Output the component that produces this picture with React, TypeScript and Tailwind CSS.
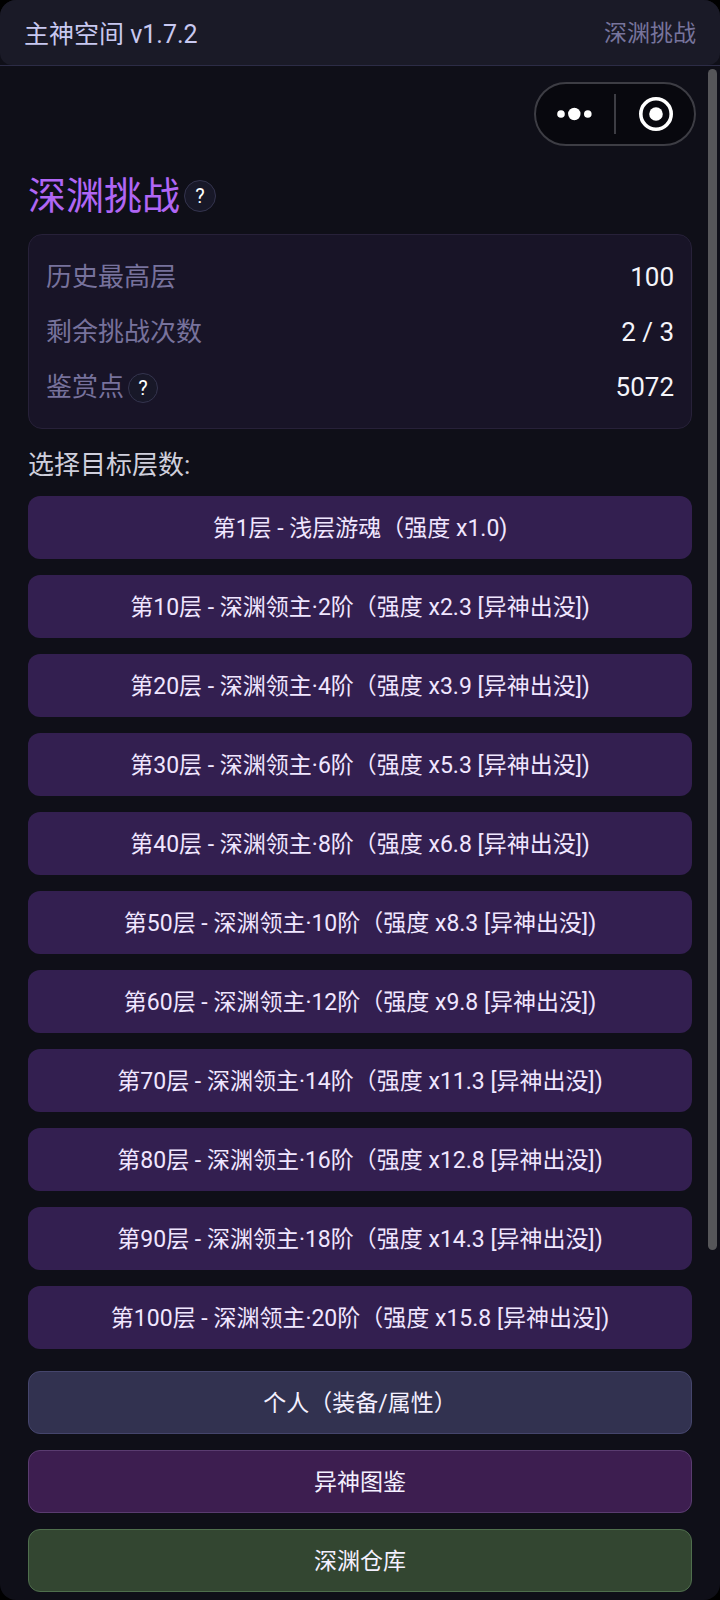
import React from 'react'

interface Floor {
  level: number
  name: string
  power: string
  boss?: boolean
}

const floors: Floor[] = [
  { level: 1, name: '浅层游魂', power: '1.0' },
  { level: 10, name: '深渊领主·2阶', power: '2.3', boss: true },
  { level: 20, name: '深渊领主·4阶', power: '3.9', boss: true },
  { level: 30, name: '深渊领主·6阶', power: '5.3', boss: true },
  { level: 40, name: '深渊领主·8阶', power: '6.8', boss: true },
  { level: 50, name: '深渊领主·10阶', power: '8.3', boss: true },
  { level: 60, name: '深渊领主·12阶', power: '9.8', boss: true },
  { level: 70, name: '深渊领主·14阶', power: '11.3', boss: true },
  { level: 80, name: '深渊领主·16阶', power: '12.8', boss: true },
  { level: 90, name: '深渊领主·18阶', power: '14.3', boss: true },
  { level: 100, name: '深渊领主·20阶', power: '15.8', boss: true },
]

const links = [
  { label: '个人（装备/属性）', color: 'bg-[#323250] border-[#45456c]' },
  { label: '异神图鉴', color: 'bg-[#3d1e50] border-[#5a3c70]' },
  { label: '深渊仓库', color: 'bg-[#334631] border-[#4f6e4d]' },
]

const Capsule = () => {
  return (
    <div className="flex h-16 w-[162px] items-center rounded-full border-2 border-[#3d3d44] bg-[#08080e]">
      <button type="button" aria-label="更多" className="flex flex-1 justify-center">
        <svg width="36" height="36" viewBox="0 0 36 36" fill="#fff">
          <circle cx="4" cy="18" r="3.8" />
          <circle cx="17.3" cy="18" r="6.2" />
          <circle cx="30.8" cy="18" r="3.8" />
        </svg>
      </button>
      <span className="h-10 w-0.5 bg-[#3d3d44]" />
      <button type="button" aria-label="关闭" className="flex flex-1 justify-center">
        <svg width="36" height="36" viewBox="0 0 36 36">
          <circle cx="19" cy="18" r="15.2" fill="none" stroke="#fff" strokeWidth="3.6" />
          <circle cx="19" cy="18" r="6.8" fill="#fff" />
        </svg>
      </button>
    </div>
  )
}

const Help = ({ size }: { size: string }) => {
  return (
    <button
      type="button"
      className={`flex items-center justify-center rounded-full border border-[#34344e] bg-[#181828] text-white ${size}`}
    >
      ?
    </button>
  )
}

const App = () => {
  return (
    <div className="min-h-screen bg-black font-['Roboto','Noto_Sans_CJK_SC',sans-serif]">
      <div className="flex min-h-screen flex-col overflow-hidden rounded-2xl bg-[#0f0f18]">
        <header className="border-b border-[#2c2c46]">
          <div className="flex h-[65px] items-center justify-between rounded-b-xl bg-[#1a1a27] px-6 pt-1">
            <span className="text-[25px] text-[#c8c8f0]">主神空间 v1.7.2</span>
            <span className="text-[23px] text-[#77749c]">深渊挑战</span>
          </div>
        </header>

        <main className="relative flex-1 pt-4 pr-7 pb-2 pl-7">
          <div className="absolute top-[3px] right-[3px] h-[77%] w-[9px] rounded-full bg-[#565659]" />

          <div className="-mr-1 flex justify-end">
            <Capsule />
          </div>

          <div className="mt-[22px] flex h-14 items-center gap-1">
            <h1 className="text-[38px] text-[#b066f5]">深渊挑战</h1>
            <Help size="size-8 text-xl" />
          </div>

          <dl className="mt-[10px] rounded-[14px] border border-[#272139] bg-[#181427] px-[17px] pt-[15px] pb-[13px] text-[26px] text-[#77729c]">
            <div className="flex h-[55px] items-center justify-between">
              <dt>历史最高层</dt>
              <dd className="text-[#f4f4fa]">100</dd>
            </div>
            <div className="flex h-[55px] items-center justify-between">
              <dt>剩余挑战次数</dt>
              <dd className="text-[#f4f4fa]">2 / 3</dd>
            </div>
            <div className="flex h-[55px] items-center justify-between">
              <dt className="flex items-center gap-1">
                鉴赏点
                <Help size="size-[30px] text-xl" />
              </dt>
              <dd className="text-[#f4f4fa]">5072</dd>
            </div>
          </dl>

          <p className="mt-4 mb-[11px] text-[26px] leading-10 text-[#cfcfdc]">选择目标层数:</p>

          <div className="flex flex-col gap-4">
            {floors.map(({ level, name, power, boss }) => (
              <button
                key={level}
                type="button"
                className="h-[63px] w-full rounded-xl bg-[#331f50] pt-1 text-[23px] text-[#f0e6ff]"
              >
                {`第${level}层 - ${name}（强度 x${power}${boss ? ' [异神出没]' : ''})`}
              </button>
            ))}
          </div>

          <div className="mt-[22px] flex flex-col gap-4">
            {links.map(({ label, color }) => (
              <button
                key={label}
                type="button"
                className={`h-[63px] w-full rounded-xl border pt-1 text-[23px] text-[#f4f0ff] ${color}`}
              >
                {label}
              </button>
            ))}
          </div>
        </main>
      </div>
    </div>
  )
}

export default App
